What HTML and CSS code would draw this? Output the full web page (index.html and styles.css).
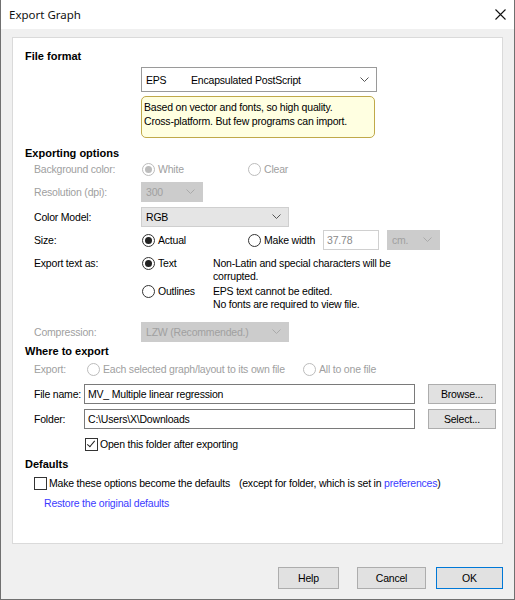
FILE: index.html
```html
<!DOCTYPE html>
<html lang="en">
<head>
    <meta charset="UTF-8">
    <title>Export Graph</title>
    <link rel="stylesheet" href="styles.css">
</head>
<body>
    <div class="window">
        <div class="titlebar">
            <span class="title">Export Graph</span>
            <svg class="close" width="11" height="11" viewBox="0 0 11 11">
                <path d="M0.5 0.5 L10.5 10.5 M10.5 0.5 L0.5 10.5" stroke="#111" stroke-width="1.1" fill="none"/>
            </svg>
        </div>

        <div class="client">
            <div class="panel">
                <div class="heading">File format</div>
                <div class="row format-row">
                    <div class="combo format-combo">
                        <span class="fmt-code">EPS</span>
                        <span class="fmt-name">Encapsulated PostScript</span>
                        <svg class="chev" width="9" height="5" viewBox="0 0 9 5"><path d="M0.5 0.5 L4.5 4.5 L8.5 0.5" stroke="#555" fill="none"/></svg>
                    </div>
                </div>
                <div class="row note-row">
                    <div class="note">Based on vector and fonts, so high quality.<br>Cross-platform. But few programs can import.</div>
                </div>

                <div class="heading h-export">Exporting options</div>
                <div class="row opt-row r-bg">
                    <span class="lbl disabled">Background color:</span>
                    <span class="choice c1 disabled"><span class="radio on"></span>White</span>
                    <span class="choice disabled"><span class="radio"></span>Clear</span>
                </div>
                <div class="row opt-row r-res">
                    <span class="lbl disabled">Resolution (dpi):</span>
                    <div class="combo off w-res">300
                        <svg class="chev" width="9" height="5" viewBox="0 0 9 5"><path d="M0.5 0.5 L4.5 4.5 L8.5 0.5" stroke="#aaa" fill="none"/></svg>
                    </div>
                </div>
                <div class="row opt-row r-color">
                    <span class="lbl">Color Model:</span>
                    <div class="combo flat w-wide">RGB
                        <svg class="chev" width="9" height="5" viewBox="0 0 9 5"><path d="M0.5 0.5 L4.5 4.5 L8.5 0.5" stroke="#555" fill="none"/></svg>
                    </div>
                </div>
                <div class="row opt-row r-size">
                    <span class="lbl">Size:</span>
                    <span class="choice c1"><span class="radio on"></span>Actual</span>
                    <span class="choice c2"><span class="radio"></span>Make width</span>
                    <div class="field w-num">37.78</div>
                    <div class="combo off w-unit">cm.
                        <svg class="chev" width="9" height="5" viewBox="0 0 9 5"><path d="M0.5 0.5 L4.5 4.5 L8.5 0.5" stroke="#aaa" fill="none"/></svg>
                    </div>
                </div>
                <div class="row text-row t1">
                    <span class="lbl">Export text as:</span>
                    <span class="choice c3"><span class="radio on"></span>Text</span>
                    <span class="desc">Non-Latin and special characters will be<br>corrupted.</span>
                </div>
                <div class="row text-row t2">
                    <span class="lbl"></span>
                    <span class="choice c3"><span class="radio"></span>Outlines</span>
                    <span class="desc">EPS text cannot be edited.<br>No fonts are required to view file.</span>
                </div>
                <div class="row opt-row r-comp">
                    <span class="lbl disabled">Compression:</span>
                    <div class="combo off w-wide">LZW (Recommended.)
                        <svg class="chev" width="9" height="5" viewBox="0 0 9 5"><path d="M0.5 0.5 L4.5 4.5 L8.5 0.5" stroke="#aaa" fill="none"/></svg>
                    </div>
                </div>

                <div class="heading h-where">Where to export</div>
                <div class="row opt-row r-export">
                    <span class="lbl short disabled">Export:</span>
                    <span class="choice c4 disabled"><span class="radio"></span>Each selected graph/layout to its own file</span>
                    <span class="choice disabled"><span class="radio"></span>All to one file</span>
                </div>
                <div class="row opt-row r-file">
                    <span class="lbl shorter">File name:</span>
                    <div class="field w-path">MV_ Multiple linear regression</div>
                    <button class="btn small">Browse...</button>
                </div>
                <div class="row opt-row r-folder">
                    <span class="lbl shorter">Folder:</span>
                    <div class="field w-path">C:\Users\X\Downloads</div>
                    <button class="btn small">Select...</button>
                </div>
                <div class="row opt-row r-open">
                    <span class="check on"></span>
                    <span>Open this folder after exporting</span>
                </div>

                <div class="heading h-defaults">Defaults</div>
                <div class="row opt-row r-make">
                    <span class="check"></span>
                    <span class="make-text">Make these options become the defaults</span>
                    <span>(except for folder, which is set in <a class="link">preferences</a>)</span>
                </div>
                <div class="row opt-row r-restore">
                    <a class="link">Restore the original defaults</a>
                </div>
            </div>

            <div class="buttons">
                <button class="btn b-help">Help</button>
                <button class="btn b-cancel">Cancel</button>
                <button class="btn b-ok default">OK</button>
            </div>
        </div>
    </div>
</body>
</html>
```

FILE: styles.css
```css
body {
    margin: 0;
    font-family: "Liberation Sans", Arial, sans-serif;
    font-size: 10.5px;
    letter-spacing: -0.2px;
    color: #000;
    background: #fff;
    white-space: nowrap;
}

.window {
    width: 515px;
    height: 600px;
    box-sizing: border-box;
    border: 1px solid #707070;
    border-top: none;
    background: #f0f0f0;
    display: flex;
    flex-direction: column;
}

.titlebar {
    height: 29px;
    flex: none;
    background: #fff;
    display: flex;
    align-items: center;
    justify-content: space-between;
    padding: 0 8px 0 8px;
}

.title {
    font-family: "Noto Sans", sans-serif;
    font-size: 11.5px;
    letter-spacing: 0;
    color: #111;
}

.client {
    flex: 1;
    padding: 8px 11px 0 11px;
}

.panel {
    height: 507px;
    box-sizing: border-box;
    background: #fff;
    border: 1px solid #dadada;
    padding: 11px 0 0 12px;
}

.heading {
    font-weight: bold;
    font-size: 11px;
    letter-spacing: 0;
    height: 14px;
    line-height: 14px;
}

.h-export { margin-top: 8px; }
.h-where { margin-top: 2px; }
.h-defaults { margin-top: 6px; }

.row {
    display: flex;
    align-items: center;
    padding-left: 9px;
}

.lbl {
    width: 107px;
    flex: none;
}

.lbl.short { width: 52px; }
.lbl.shorter { width: 50px; }

.disabled { color: #a0a0a0; }

.format-row { margin-top: 4px; padding-left: 116px; }

.combo {
    position: relative;
    box-sizing: border-box;
    display: flex;
    align-items: center;
    padding-left: 4px;
}

.chev {
    position: absolute;
    right: 7px;
    top: 50%;
    margin-top: -3px;
}

.format-combo {
    width: 236px;
    height: 25px;
    border: 1px solid #9a9a9a;
    background: #fff;
}

.fmt-code { width: 45px; }

.note-row { margin-top: 4px; padding-left: 116px; }

.note {
    width: 234px;
    height: 42px;
    box-sizing: border-box;
    background: #ffffe1;
    border: 1px solid #c0a94a;
    border-radius: 5px;
    padding: 3px 0 0 2px;
    line-height: 14px;
}

.opt-row { height: 18px; }

.r-res { margin-top: 4px; height: 20px; }
.r-color { margin-top: 5px; height: 20px; }
.r-size { margin-top: 3px; height: 20px; }
.r-comp { margin-top: 11px; height: 20px; }
.r-export { margin-top: 4px; height: 14px; }
.r-file { margin-top: 8px; height: 20px; }
.r-folder { margin-top: 5px; height: 20px; }
.r-open { margin-top: 8px; height: 14px; padding-left: 60px; }
.r-make { margin-top: 5px; height: 14px; padding-left: 9px; }
.r-restore { margin-top: 6px; height: 14px; padding-left: 19px; }

.off {
    height: 20px;
    background: #cccccc;
    border: 1px solid #cccccc;
    color: #a0a0a0;
}

.flat {
    height: 20px;
    background: #e5e5e5;
    border: 1px solid #cfcfcf;
}

.w-res { width: 62px; }
.w-wide { width: 148px; }
.w-unit { width: 53px; }

.field {
    box-sizing: border-box;
    height: 20px;
    border: 1px solid #7a7a7a;
    background: #fff;
    display: flex;
    align-items: center;
    padding-left: 3px;
}

.w-num {
    width: 56px;
    border-color: #d0d0d0;
    color: #8a8a8a;
    margin-right: 8px;
}

.w-path { width: 331px; }

.choice {
    display: flex;
    align-items: center;
    flex: none;
}

.c1 { width: 106px; }
.c2 { width: 76px; }
.c3 { width: 72px; }
.c4 { width: 216px; }

.radio {
    width: 13px;
    height: 13px;
    box-sizing: border-box;
    border: 1px solid #333;
    border-radius: 50%;
    margin: 0 3px 0 1px;
    display: flex;
    align-items: center;
    justify-content: center;
}

.radio.on::after {
    content: "";
    width: 7px;
    height: 7px;
    border-radius: 50%;
    background: #222;
}

.disabled .radio { border-color: #bcbcbc; }
.disabled .radio.on::after { background: #bcbcbc; }

.text-row {
    align-items: flex-start;
    line-height: 13px;
}

.text-row .choice { height: 13px; }
.t1 { margin-top: 7px; }
.t2 { margin-top: 2px; }

.check {
    width: 13px;
    height: 13px;
    box-sizing: border-box;
    border: 1px solid #333;
    margin-right: 2px;
    flex: none;
    position: relative;
}

.check.on::after {
    content: "";
    position: absolute;
    left: 3px;
    top: 0px;
    width: 3px;
    height: 7px;
    border: solid #222;
    border-width: 0 1px 1px 0;
    transform: rotate(40deg);
}

.make-text { margin-right: 9px; }

.link {
    color: #3b3bff;
    cursor: pointer;
}

.btn {
    font-family: "Liberation Sans", Arial, sans-serif;
    font-size: 10.5px;
    letter-spacing: -0.2px;
    color: #000;
    background: #e1e1e1;
    border: 1px solid #adadad;
    padding: 0;
    height: 22px;
}

.btn.small {
    width: 68px;
    height: 20px;
    margin-left: 13px;
}

.buttons {
    display: flex;
    justify-content: flex-end;
    margin-top: 23px;
}

.b-help { width: 61px; }
.b-cancel { width: 69px; margin-left: 18px; }
.b-ok { width: 67px; margin-left: 10px; }

.default {
    border-color: #0078d7;
}
```
